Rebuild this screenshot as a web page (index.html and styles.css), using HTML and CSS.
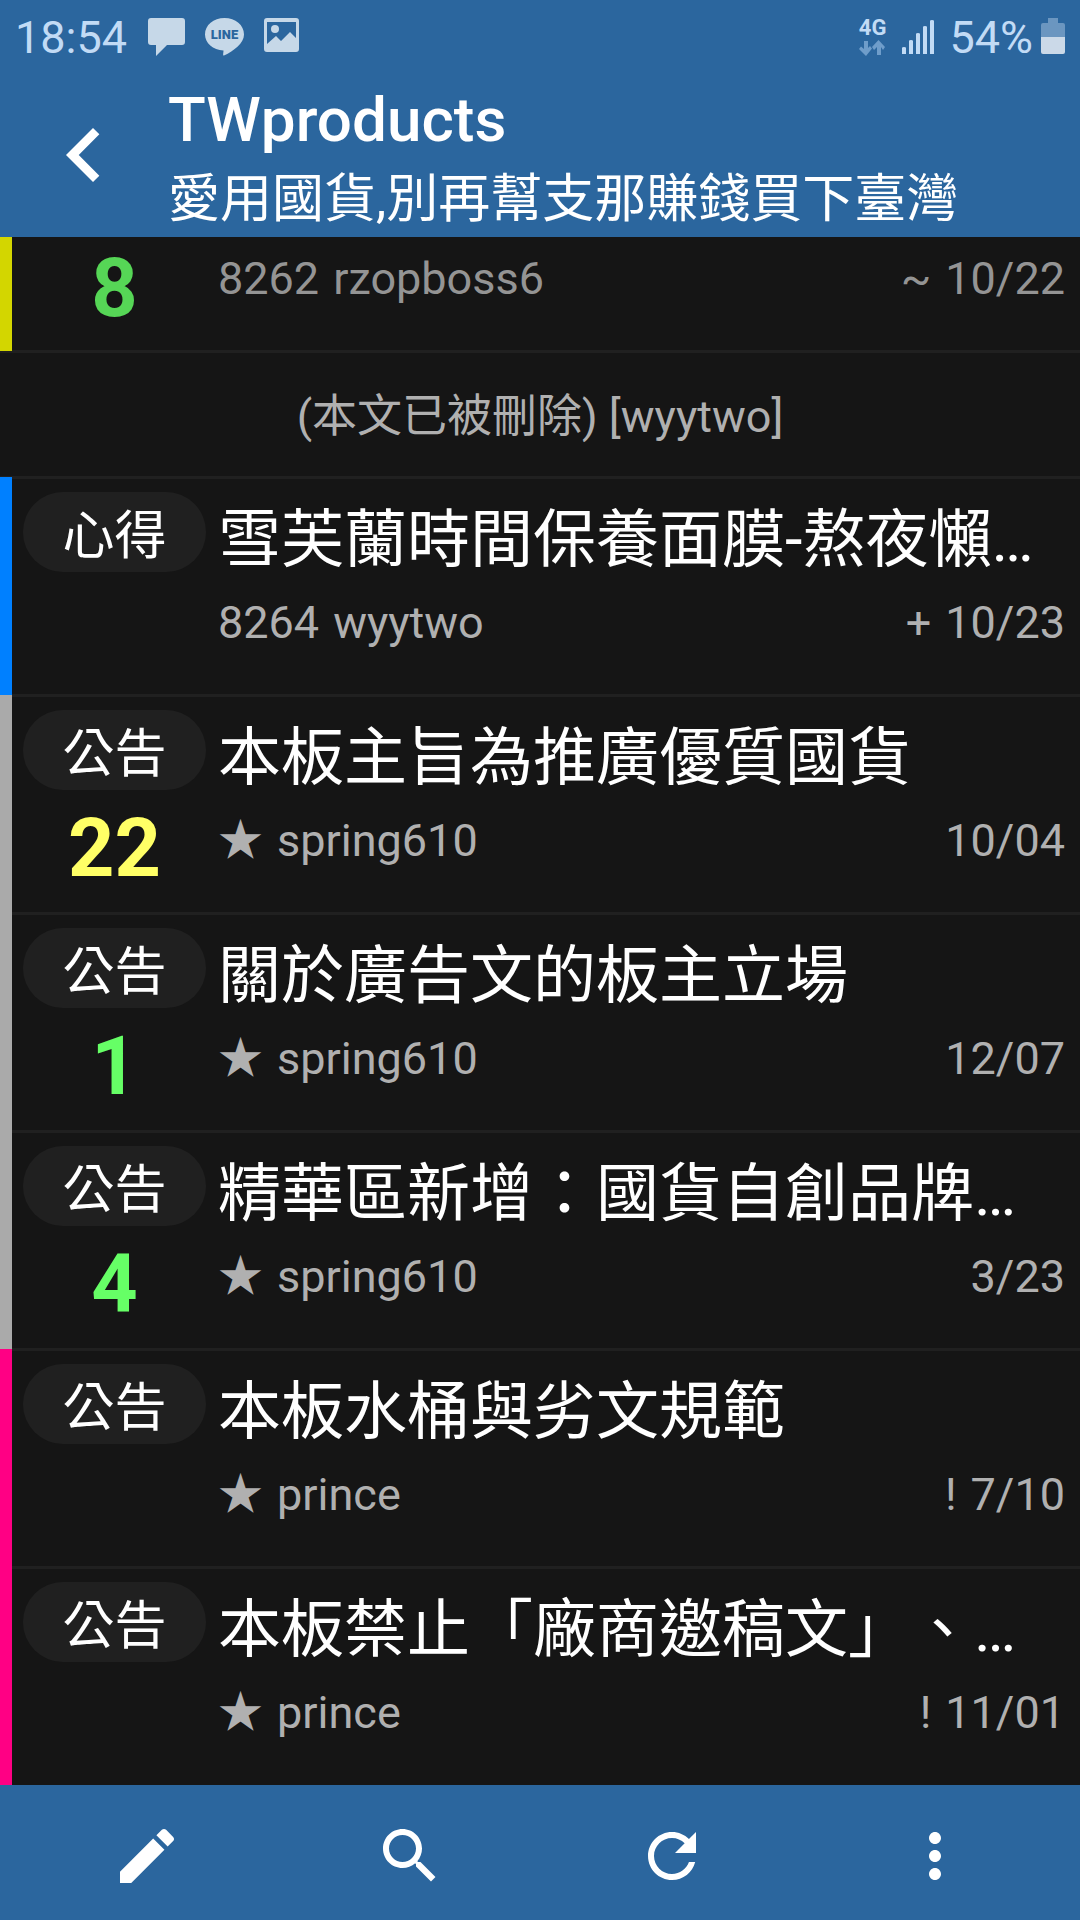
FILE: index.html
```html
<!DOCTYPE html>
<html lang="zh-Hant-TW">
<head>
<meta charset="utf-8">
<meta name="viewport" content="width=device-width, initial-scale=1">
<title>TWproducts</title>
<link rel="stylesheet" href="styles.css">
</head>
<body>
<div class="screen">
  <div class="status">
    <span class="status-text">18:54</span>
    <span class="notices">
      <svg width="37" height="38" viewBox="0 0 37 38" aria-hidden="true"><path fill="currentColor" d="M3 0H34Q37 0 37 3V24Q37 27 34 27H19L8 38V27H3Q0 27 0 24V3Q0 0 3 0Z"/></svg>
      <svg width="39" height="38" viewBox="0 0 39 38" aria-hidden="true"><path fill="currentColor" d="M19.500 0C30.500 0 39 7 39 16.500C39 25 29 33 19 37.500C17.500 38 18.500 35 18.500 32.500C8 32 0 25 0 16.500C0 7 8.500 0 19.500 0Z"/><text class="line-mark" x="19.500" y="21" text-anchor="middle">LINE</text></svg>
      <svg width="35" height="34" viewBox="0 0 35 34" aria-hidden="true"><path fill="currentColor" fill-rule="evenodd" d="M3 0H32Q35 0 35 3V31Q35 34 32 34H3Q0 34 0 31V3Q0 0 3 0ZM3 4V26L12 18L17 23L26 14L32 20V4Z"/><circle cx="11" cy="11" r="4" fill="currentColor"/></svg>
    </span>
    <span class="network">
      <span class="network-label">4G</span>
      <svg width="26" height="16" viewBox="0 0 26 16" aria-hidden="true"><path fill="currentColor" d="M5 1H9V8L11 6L13 8.500L7 16L0 9L2 6.500L5 9ZM18 15V7L15 10L13 7L19.500 0L26 7L24 10L22 7V15Z"/></svg>
    </span>
    <svg class="signal" width="32" height="34" viewBox="0 0 32 34" aria-hidden="true"><path fill="currentColor" d="M0 28q0-1 2-1t2 1v6H0zM7 21q0-1 2-1t2 1v13H7zM14 14q0-1 2-1t2 1v20h-4zM21 7q0-1 2-1t2 1v27h-4zM28 1q0-1 2-1t2 1v33h-4z"/></svg>
    <span class="status-text">54%</span>
    <svg class="battery" width="24" height="36" viewBox="0 0 24 36" aria-hidden="true"><path fill="#6b96c0" d="M7 0H17V5H22Q24 5 24 7V19H0V7Q0 5 2 5H7Z"/><path fill="#cbd9e8" d="M0 19H24V34Q24 36 22 36H2Q0 36 0 34Z"/></svg>
  </div>

  <header class="appbar">
    <button class="back" type="button" aria-label="返回">
      <svg width="108" height="108" viewBox="0 0 24 24" aria-hidden="true"><path fill="currentColor" d="M15.410 7.410L14 6l-6 6 6 6 1.410-1.410L10.830 12z"/></svg>
    </button>
    <div class="heading">
      <h1 class="board">TWproducts</h1>
      <p class="slogan">愛用國貨,別再幫支那賺錢買下臺灣</p>
    </div>
  </header>

  <main class="list">
    <article class="thread thread-cut bar-yellow read">
      <div class="side"><span class="count green">8</span></div>
      <div class="body">
        <p class="meta"><span>8262</span><span>rzopboss6</span><span class="flag">~</span><span>10/22</span></p>
      </div>
    </article>
    <article class="deleted">(本文已被刪除) [wyytwo]</article>
    <article class="thread bar-blue">
      <div class="side"><span class="tag">心得</span></div>
      <div class="body">
        <h2 class="title">雪芙蘭時間保養面膜-熬夜懶…</h2>
        <p class="meta"><span>8264</span><span>wyytwo</span><span class="flag">+</span><span>10/23</span></p>
      </div>
    </article>
    <article class="thread bar-gray">
      <div class="side"><span class="tag">公告</span><span class="count yellow">22</span></div>
      <div class="body">
        <h2 class="title">本板主旨為推廣優質國貨</h2>
        <p class="meta"><span>★</span><span>spring610</span><span class="flag"></span><span>10/04</span></p>
      </div>
    </article>
    <article class="thread bar-gray">
      <div class="side"><span class="tag">公告</span><span class="count green">1</span></div>
      <div class="body">
        <h2 class="title">關於廣告文的板主立場</h2>
        <p class="meta"><span>★</span><span>spring610</span><span class="flag"></span><span>12/07</span></p>
      </div>
    </article>
    <article class="thread bar-gray">
      <div class="side"><span class="tag">公告</span><span class="count green">4</span></div>
      <div class="body">
        <h2 class="title">精華區新增：國貨自創品牌…</h2>
        <p class="meta"><span>★</span><span>spring610</span><span class="flag"></span><span>3/23</span></p>
      </div>
    </article>
    <article class="thread bar-pink">
      <div class="side"><span class="tag">公告</span></div>
      <div class="body">
        <h2 class="title">本板水桶與劣文規範</h2>
        <p class="meta"><span>★</span><span>prince</span><span class="flag">!</span><span>7/10</span></p>
      </div>
    </article>
    <article class="thread bar-pink">
      <div class="side"><span class="tag">公告</span></div>
      <div class="body">
        <h2 class="title">本板禁止「廠商邀稿文」、…</h2>
        <p class="meta"><span>★</span><span>prince</span><span class="flag">!</span><span>11/01</span></p>
      </div>
    </article>
  </main>

  <nav class="toolbar">
    <button class="tool" type="button" aria-label="發文"><svg width="72" height="72" viewBox="0 0 24 24" aria-hidden="true"><path fill="currentColor" d="M3 17.250V21h3.750L17.810 9.940l-3.750-3.750L3 17.250zM20.710 7.040c.39-.39.39-1.020 0-1.410l-2.340-2.340c-.39-.39-1.020-.39-1.410 0l-1.830 1.830 3.750 3.750 1.830-1.830z"/></svg></button>
    <button class="tool" type="button" aria-label="搜尋"><svg width="72" height="72" viewBox="0 0 24 24" aria-hidden="true"><path fill="currentColor" d="M15.500 14h-.79l-.28-.27C15.410 12.590 16 11.110 16 9.500 16 5.910 13.090 3 9.500 3S3 5.910 3 9.500 5.910 16 9.500 16c1.610 0 3.090-.59 4.230-1.570l.27.28v.79l5 4.990L20.490 19l-4.990-5zm-6 0C7.010 14 5 11.990 5 9.500S7.010 5 9.500 5 14 7.010 14 9.500 11.990 14 9.500 14z"/></svg></button>
    <button class="tool" type="button" aria-label="重新整理"><svg width="72" height="72" viewBox="0 0 24 24" aria-hidden="true"><path fill="currentColor" d="M17.650 6.350C16.200 4.900 14.210 4 12 4c-4.420 0-7.990 3.580-7.990 8s3.570 8 7.990 8c3.730 0 6.840-2.550 7.730-6h-2.080c-.82 2.330-3.040 4-5.650 4-3.310 0-6-2.690-6-6s2.690-6 6-6c1.660 0 3.140.69 4.220 1.780L13 11h7V4l-2.350 2.350z"/></svg></button>
    <button class="tool" type="button" aria-label="更多"><svg width="72" height="72" viewBox="0 0 24 24" aria-hidden="true"><path fill="currentColor" d="M12 8c1.100 0 2-.9 2-2s-.9-2-2-2-2 .9-2 2 .9 2 2 2zm0 2c-1.100 0-2 .9-2 2s.9 2 2 2 2-.9 2-2-.9-2-2-2zm0 6c-1.100 0-2 .9-2 2s.9 2 2 2 2-.9 2-2-.9-2-2-2z"/></svg></button>
  </nav>
</div>
</body>
</html>
```
FILE: styles.css
```css
* {
  box-sizing: border-box;
}

body {
  margin: 0;
  background: #151515;
  color: #fff;
  font-family: Roboto, "Noto Sans CJK TC", sans-serif;
  text-spacing-trim: space-all;
}

h1,
h2,
p {
  margin: 0;
  font-weight: 400;
}

button {
  margin: 0;
  padding: 0;
  border: 0;
  background: none;
  color: inherit;
}

svg {
  display: block;
  flex: none;
}

.screen {
  display: flex;
  flex-direction: column;
  min-height: 100vh;
}

/* Status bar */
.status {
  display: flex;
  align-items: flex-start;
  height: 72px;
  padding: 18px 15px 0;
  background: #2b669e;
  color: #c6d8e8;
}

.status-text {
  font-size: 45px;
  line-height: 40px;
  color: #c2dbf5;
}

.notices {
  display: flex;
  gap: 20px;
  margin-left: 21px;
  margin-right: auto;
}

.line-mark {
  fill: #2b669e;
  font-size: 13px;
  font-weight: 900;
}

.network {
  display: flex;
  flex-direction: column;
  gap: 2px;
  color: #6f9dca;
}

.network-label {
  font-size: 22px;
  font-weight: 700;
  line-height: 20px;
  color: #c2dbf5;
}

.signal {
  margin: 2px 15px 0 16px;
  color: #c2dbf5;
}

.battery {
  margin-left: 8px;
}

/* App bar */
.appbar {
  display: flex;
  align-items: center;
  gap: 30px;
  height: 165px;
  padding: 0 30px;
  background: #2b669e;
}

.heading {
  min-width: 0;
  padding-top: 10px;
  white-space: nowrap;
}

.board {
  font-size: 62px;
  font-weight: 500;
  line-height: 80px;
}

.slogan {
  font-size: 52px;
  line-height: 80px;
}

/* Thread list */
.list {
  flex: 1;
}

.thread {
  display: flex;
  height: 218px;
  border-left: 12px solid;
}

.side {
  display: flex;
  flex-direction: column;
  align-items: center;
  width: 206px;
  padding: 13px 12px 0 11px;
  border-top: 2px solid #202020;
  border-bottom: 1px solid #202020;
}

.body {
  flex: 1;
  min-width: 0;
  padding: 16px 15px 0 0;
  border-top: 2px solid #202020;
  border-bottom: 1px solid #202020;
}

.thread:last-child .side,
.thread:last-child .body {
  border-bottom: 0;
}

.thread-cut {
  height: 114px;
}

.thread-cut .side,
.thread-cut .body {
  padding-top: 4px;
  border-top: 0;
}

.tag {
  width: 100%;
  height: 80px;
  margin-bottom: 11px;
  border-radius: 40px;
  background: #202020;
  font-size: 52px;
  line-height: 90px;
  text-align: center;
}

.count {
  font-size: 81px;
  font-weight: 700;
  line-height: 96px;
}

.title {
  overflow: hidden;
  font-size: 63px;
  line-height: 90px;
  white-space: nowrap;
}

.meta {
  display: flex;
  gap: 14px;
  font-size: 45px;
  line-height: 76px;
  color: #b0b0b0;
}

.flag {
  margin-left: auto;
}

.deleted {
  height: 126px;
  border-top: 2px solid #202020;
  border-bottom: 1px solid #202020;
  font-size: 45px;
  line-height: 128px;
  text-align: center;
  color: #b0b0b0;
}

.green {
  color: #66ff66;
}

.yellow {
  color: #ffff66;
}

.read .green {
  color: #56d656;
}

.read .meta {
  color: #949494;
}

.bar-yellow {
  border-left-color: #d3d600;
}

.bar-blue {
  border-left-color: #0080ff;
}

.bar-gray {
  border-left-color: #aaa;
}

.bar-pink {
  border-left-color: #ff0084;
}

/* Bottom toolbar */
.toolbar {
  display: grid;
  grid-template-columns: repeat(4, 1fr);
  height: 135px;
  padding: 6px 14px 0 16px;
  background: #2b669e;
}

.tool {
  display: flex;
  align-items: center;
  justify-content: center;
}
```
